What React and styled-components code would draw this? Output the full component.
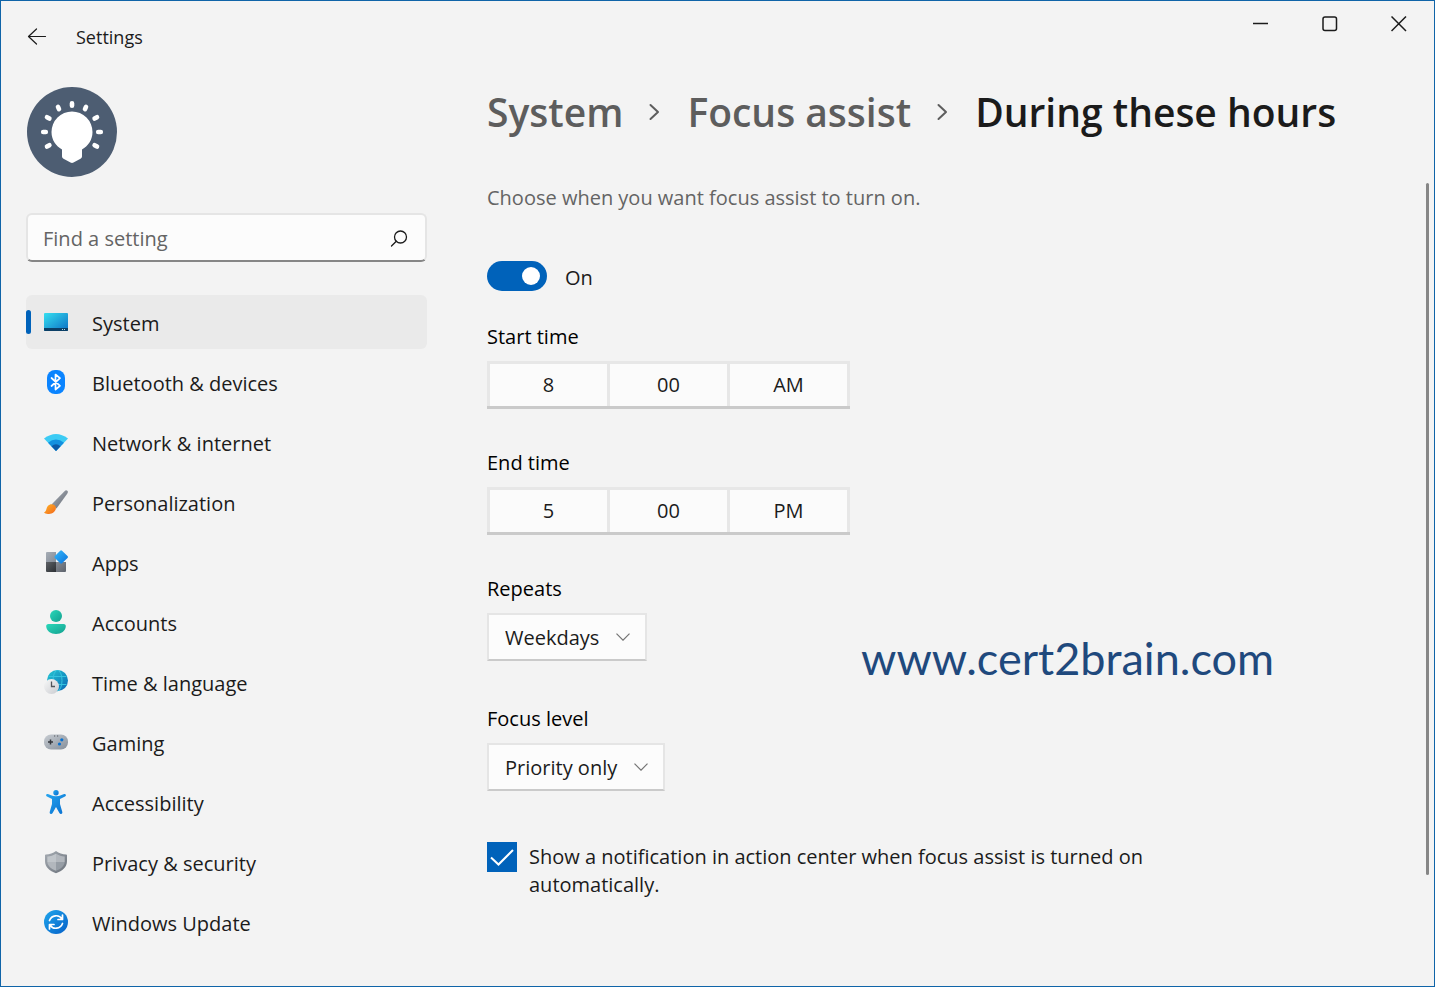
import React from "react";
import styled, { createGlobalStyle } from "styled-components";

const GlobalStyle = createGlobalStyle`
  * { box-sizing: border-box; }
  body {
    margin: 0;
    background: #f3f3f3;
    color: #1b1b1b;
    font-family: "Open Sans", "Noto Sans", sans-serif;
    font-size: 20px;
    line-height: 28px;
  }
  button, input, select { font: inherit; color: inherit; }
`;

const Window = styled.div`
  position: relative;
  min-height: 100vh;
  display: flex;
  flex-direction: column;
  border: 1px solid #0f64a8;
`;

const TitleBar = styled.header`
  display: flex;
  align-items: flex-start;
  justify-content: space-between;
  height: 72px;
`;

const TitleGroup = styled.div`
  display: flex;
  align-items: center;
  gap: 29px;
  height: 72px;
  padding-left: 26px;
`;

const WindowControls = styled.div`
  display: flex;
  padding-right: 1px;
`;

const IconButton = styled.button`
  display: grid;
  place-items: center;
  width: ${(p) => p.$width}px;
  height: ${(p) => p.$height}px;
  padding: 0;
  border: 0;
  background: none;
`;

const AppTitle = styled.span`
  font-size: 18px;
  line-height: 24px;
`;

const Body = styled.div`
  flex: 1;
  display: flex;
  gap: 60px;
  padding-left: 25px;
`;

const Sidebar = styled.aside`
  flex: 0 0 401px;
  padding: 14px 0 36px;
`;

const AvatarPicture = styled.svg`
  display: block;
  margin-left: 1px;
`;

const SearchBox = styled.form`
  display: flex;
  align-items: center;
  height: 49px;
  margin: 36px 0 33px;
  padding: 0 17px 0 15px;
  border: 2px solid #e5e5e5;
  border-bottom-color: #868686;
  border-radius: 6px;
  background: #fcfcfc;
`;

const SearchInput = styled.input`
  flex: 1;
  min-width: 0;
  padding: 2px 0 0;
  border: 0;
  outline: 0;
  background: none;
  &::placeholder { color: #646464; opacity: 1; }
`;

const Nav = styled.nav`
  display: flex;
  flex-direction: column;
  gap: 6px;
`;

const NavLink = styled.a`
  position: relative;
  display: flex;
  align-items: center;
  gap: 24px;
  height: 54px;
  padding: 4px 18px 0;
  border-radius: 6px;
  color: inherit;
  text-decoration: none;
  background: ${(p) => (p.$active ? "#eaeaea" : "transparent")};
  svg { flex: none; margin-bottom: 4px; }
  &::before {
    content: "";
    display: ${(p) => (p.$active ? "block" : "none")};
    position: absolute;
    left: 0;
    top: 15px;
    width: 5px;
    height: 24px;
    border-radius: 3px;
    background: #0062ba;
  }
`;

const Main = styled.main`
  flex: 1;
  min-width: 0;
  padding-top: 11px;
`;

const Breadcrumb = styled.h1`
  display: flex;
  align-items: center;
  gap: 26px;
  margin: 0 0 43px;
  font-size: 39px;
  line-height: 56px;
  font-weight: 600;
  white-space: nowrap;
`;

const Crumb = styled.a`
  color: #5d5d5d;
  text-decoration: none;
`;

const Scroller = styled.div`
  display: flex;
  justify-content: space-between;
`;

const Thumb = styled.div`
  flex: none;
  width: 3px;
  height: 692px;
  margin-right: 5px;
  border-radius: 2px;
  background: #868686;
`;

const Content = styled.div`
  max-width: 700px;
`;

const Intro = styled.p`
  margin: 1px 0 49px;
  color: #646464;
`;

const SwitchRow = styled.label`
  display: flex;
  align-items: center;
  gap: 18px;
  height: 30px;
  margin-bottom: 32px;
`;

const SwitchText = styled.span`
  padding-top: 3px;
`;

const Switch = styled.input`
  appearance: none;
  display: flex;
  align-items: center;
  justify-content: flex-start;
  width: 60px;
  height: 30px;
  margin: 0;
  padding: 0 7px;
  border-radius: 15px;
  background: #868686;
  &::after {
    content: "";
    width: 18px;
    height: 18px;
    border-radius: 50%;
    background: #fff;
  }
  &:checked { justify-content: flex-end; background: #0062ba; }
`;

const Field = styled.div`
  display: flex;
  flex-direction: column;
  align-items: flex-start;
  gap: 10px;
  margin-bottom: ${(p) => p.$after}px;
  color: #000;
`;

const TimePicker = styled.div`
  display: flex;
  gap: 3px;
  height: 48px;
  padding: 3px 3px 0;
  border-bottom: 3px solid #cacaca;
  background: #e7e7e7;
`;

const TimePart = styled.button`
  width: 117px;
  padding: 0;
  border: 0;
  background: #fbfbfb;
  color: #1b1b1b;
`;

const SelectWrap = styled.div`
  display: grid;
  align-items: center;
  justify-items: end;
  width: ${(p) => p.$width}px;
  svg { grid-area: 1 / 1; margin-right: 17px; pointer-events: none; }
`;

const Select = styled.select`
  grid-area: 1 / 1;
  appearance: none;
  width: 100%;
  height: 48px;
  padding: 2px 16px 0;
  border: 2px solid #e5e5e5;
  border-bottom-color: #cacaca;
  border-radius: 0;
  background: #fcfcfc;
  color: #1b1b1b;
`;

const CheckRow = styled.label`
  display: flex;
  align-items: flex-start;
  gap: 12px;
`;

const CheckText = styled.span`
  padding-top: 1px;
`;

const CheckHolder = styled.span`
  display: grid;
  flex: none;
  svg { grid-area: 1 / 1; pointer-events: none; }
`;

const Checkbox = styled.input`
  grid-area: 1 / 1;
  appearance: none;
  width: 30px;
  height: 30px;
  margin: 0;
  background: #fff;
  &:checked { background: #0062ba; }
`;

const Watermark = styled.div`
  position: absolute;
  top: 629px;
  right: 160px;
  font-family: Lato, sans-serif;
  font-size: 45px;
  line-height: 56px;
  color: #1f497d;
`;

const Grad = ({ id, from, to }) => (
  <linearGradient id={id} x1="0" y1="0" x2="1" y2="1">
    <stop offset="0" stopColor={from} />
    <stop offset="1" stopColor={to} />
  </linearGradient>
);

const Icon = ({ children }) => (
  <svg width="24" height="24" viewBox="0 0 24 24" aria-hidden="true">{children}</svg>
);

const SystemIcon = () => (
  <Icon>
    <Grad id="sys" from="#35dff0" to="#0c6fc4" />
    <rect y="3" width="24" height="18" rx="1" fill="url(#sys)" />
    <path d="M0 18h24v2a1 1 0 0 1-1 1H1a1 1 0 0 1-1-1z" fill="#0b3f66" />
    <path d="M18 19h1v1h-1zM20 19h1v1h-1z" fill="#b5ddeb" />
  </Icon>
);

const BluetoothIcon = () => (
  <Icon>
    <rect x="3" width="18" height="24" rx="8" fill="#0a84ff" />
    <path d="M7.500 8L16 15.800 11.500 19.500V4.500L16 8.200 7.500 16" fill="none" stroke="#fff" strokeWidth="1.700" strokeLinejoin="round" strokeLinecap="round" />
  </Icon>
);

const NetworkIcon = () => (
  <Icon>
    <path d="M0 8.500Q12-.5 24 8.500L12 21z" fill="#3ccbf4" />
    <path d="M4 12.700Q12 6.500 20 12.700L12 21z" fill="#1490df" />
    <path d="M7.500 16.300Q12 12.300 16.500 16.300L12 21z" fill="#0d5aa7" />
  </Icon>
);

const BrushIcon = () => (
  <Icon>
    <Grad id="handle" from="#a9afb7" to="#656b75" />
    <Grad id="bristle" from="#ffb526" to="#f2661c" />
    <path d="M7.500 14.500L20.500 1.200Q22-.3 23.300.700 24.500 1.900 23.200 3.800L12.500 18.500z" fill="url(#handle)" />
    <path d="M4 15.800c2.300-2.800 7.300-1.800 7.900 1.700.4 3.800-3.400 6.300-6.900 6.500-2.300.1-4.200-.4-5-1.500 2.600-.7 2-4.500 4-6.700z" fill="url(#bristle)" />
  </Icon>
);

const AppsIcon = () => (
  <Icon>
    <Grad id="appA" from="#a6adb6" to="#858d98" />
    <Grad id="appB" from="#5d6166" to="#2d3034" />
    <Grad id="appC" from="#868b93" to="#5c626b" />
    <Grad id="appD" from="#35b9fb" to="#0871dc" />
    <path d="M2 3a1 1 0 0 1 1-1h9v10H2z" fill="url(#appA)" />
    <path d="M2 12h10v10H3a1 1 0 0 1-1-1z" fill="url(#appB)" />
    <path d="M12 12h10v9a1 1 0 0 1-1 1h-9z" fill="url(#appC)" />
    <path d="M16.200.700q.9-.9 1.800 0l5.500 5.400q.9.900 0 1.800L18 13.300q-.9.900-1.800 0l-5.300-5.400q-.9-.9 0-1.800z" fill="url(#appD)" />
  </Icon>
);

const AccountsIcon = () => (
  <Icon>
    <Grad id="acc" from="#2ad8ba" to="#13a08f" />
    <circle cx="12" cy="6" r="6" fill="url(#acc)" />
    <path d="M4.500 14h15a2.300 2.300 0 0 1 2.300 2.500C21.500 21 17.300 24 12 24S2.500 21 2.200 16.500A2.300 2.300 0 0 1 4.500 14z" fill="url(#acc)" />
  </Icon>
);

const TimeIcon = () => (
  <Icon>
    <Grad id="globe" from="#25c8d2" to="#0867b5" />
    <Grad id="clock" from="#f8f8f8" to="#c9cbd0" />
    <circle cx="13.500" cy="10.500" r="10.500" fill="url(#globe)" />
    <g fill="none" stroke="#35c3de" strokeWidth="1">
      <ellipse cx="13.500" cy="10.500" rx="4.500" ry="10.300" />
      <path d="M4.500 6.500h18M4.500 14.500h18" />
    </g>
    <circle cx="7.500" cy="16.500" r="7.500" fill="url(#clock)" />
    <path d="M7.500 11.500v5h3.500" fill="none" stroke="#50545a" strokeWidth="1.300" />
  </Icon>
);

const GamingIcon = () => (
  <Icon>
    <Grad id="pad" from="#c8cdd3" to="#858e99" />
    <rect y="4.500" width="24" height="15" rx="7" fill="url(#pad)" />
    <path d="M6.500 9.500v5M4 12h5" stroke="#33373d" strokeWidth="1.500" />
    <path d="M10 6h1.200M13 6h1.200" stroke="#54585e" strokeWidth="1" />
    <circle cx="17.800" cy="9.800" r="1.600" fill="#0870cf" />
    <circle cx="15.500" cy="14" r="1.600" fill="#0870cf" />
  </Icon>
);

const AccessibilityIcon = () => (
  <Icon>
    <Grad id="a11y" from="#26a5ef" to="#086fd0" />
    <circle cx="12" cy="2.700" r="2.700" fill="url(#a11y)" />
    <path d="M3.800 4C5.500 4.600 8 6.200 12 6.200S18.500 4.600 20.200 4c1.700-.4 2.400 1.900.8 2.600L16 9v5l2.300 8c.4 1.900-2 2.700-2.900 1L12 17l-3.400 6c-.9 1.700-3.300.9-2.900-1L8 14V9L3 6.600C1.400 5.900 2.100 3.600 3.800 4z" fill="url(#a11y)" />
  </Icon>
);

const ShieldIcon = () => (
  <Icon>
    <Grad id="sh" from="#a7adb4" to="#697079" />
    <path d="M12 1c3 2.300 6.500 3.400 10.200 3.500.5 0 .8.300.8.800V11c0 6-4.500 10-11 12.200C5.500 21 1 17 1 11V5.300c0-.5.3-.8.800-.8C5.500 4.400 9 3.300 12 1z" fill="url(#sh)" />
    <path d="M12 3.800V12H3.300V6.500c3.200-.2 6-1.100 8.700-2.700z" fill="#c0c5ca" />
    <path d="M12 3.800V12h8.700V6.500c-3.200-.2-6-1.100-8.700-2.700z" fill="#b2b7bd" />
    <path d="M3.300 12H12v8.800C7 19 3.800 16 3.300 12z" fill="#b2b7bd" />
    <path d="M20.700 12H12v8.800c5-1.800 8.200-4.800 8.700-8.800z" fill="#969da5" />
  </Icon>
);

const UpdateIcon = () => (
  <Icon>
    <Grad id="upd" from="#20a6ec" to="#0560c8" />
    <circle cx="12" cy="12" r="12" fill="url(#upd)" />
    <g fill="none" stroke="#fff" strokeWidth="1.700" strokeLinecap="round" strokeLinejoin="round">
      <path d="M5.500 10.500c2-5.500 9.500-6.500 12.500-1.500M18.500 5v4.500H14" />
      <path d="M18.500 13.500c-2 5.500-9.500 6.500-12.500 1.500M5.500 19v-4.500H10" />
    </g>
  </Icon>
);

const Avatar = () => (
  <AvatarPicture width="90" height="90" viewBox="0 0 90 90" role="img" aria-label="Account picture">
    <circle cx="45" cy="45" r="45" fill="#4d5d72" />
    <path d="M45 24.500A20.500 20.500 0 0 0 24.500 45c0 8 4.500 14 10.500 17.500v7q0 1.500 1.500 2.300l7 3.700q1.500.8 3 0l7-3.700q1.500-.8 1.500-2.300v-7c6-3.500 10.500-9.500 10.500-17.500A20.500 20.500 0 0 0 45 24.500z" fill="#fff" />
    <path d="M45 16.200v2.600M31 19.800l1 2.400M59 19.800l-1 2.400M20 30.200l2.400 1.400M70 30.200l-2.400 1.400M16.200 45h2.600M71.200 45h2.600M20 59.600l2.400-1.400M70 59.600l-2.400-1.400" stroke="#fff" strokeWidth="4.600" strokeLinecap="round" />
  </AvatarPicture>
);

const BackArrow = () => (
  <svg width="20" height="18" viewBox="0 0 20 18" fill="none" stroke="#1b1b1b" strokeWidth="1.200" strokeLinecap="round" strokeLinejoin="round" aria-hidden="true">
    <path d="M9.500 1L1.500 8.500 9.500 16M1.500 8.500h17" />
  </svg>
);

const WindowGlyph = ({ d }) => (
  <svg width="16" height="16" viewBox="0 0 16 16" fill="none" stroke="#1b1b1b" strokeWidth="1.500" aria-hidden="true">
    <path d={d} />
  </svg>
);

const SearchGlyph = () => (
  <svg width="18" height="18" viewBox="0 0 18 18" fill="none" stroke="#1b1b1b" strokeWidth="1.300" strokeLinecap="round" aria-hidden="true">
    <circle cx="10.500" cy="8" r="6" />
    <path d="M6.300 12.300L1.500 17" />
  </svg>
);

const Separator = () => (
  <svg width="12" height="18" viewBox="0 0 12 18" fill="none" stroke="#5d5d5d" strokeWidth="2" strokeLinecap="round" strokeLinejoin="round" aria-hidden="true">
    <path d="M1.500 2L9 9 1.500 16" />
  </svg>
);

const Chevron = () => (
  <svg width="14" height="8" viewBox="0 0 14 8" fill="none" stroke="#747474" strokeWidth="1.200" aria-hidden="true">
    <path d="M.5.700L7 7.200 13.500.700" />
  </svg>
);

const navItems = [
  ["System", SystemIcon],
  ["Bluetooth & devices", BluetoothIcon],
  ["Network & internet", NetworkIcon],
  ["Personalization", BrushIcon],
  ["Apps", AppsIcon],
  ["Accounts", AccountsIcon],
  ["Time & language", TimeIcon],
  ["Gaming", GamingIcon],
  ["Accessibility", AccessibilityIcon],
  ["Privacy & security", ShieldIcon],
  ["Windows Update", UpdateIcon],
];

const windowButtons = [
  ["Minimize", "M0 7.500h15"],
  ["Maximize", "M3 1h9.500a2 2 0 0 1 2 2v9.500a2 2 0 0 1-2 2H3a2 2 0 0 1-2-2V3a2 2 0 0 1 2-2z"],
  ["Close", "M.5.500l14.500 14.500M15 .500L.5 15"],
];

function TimeField({ label, parts }) {
  return (
    <Field $after={40}>
      <span>{label}</span>
      <TimePicker role="group" aria-label={label}>
        {parts.map((part) => (
          <TimePart key={part} type="button">{part}</TimePart>
        ))}
      </TimePicker>
    </Field>
  );
}

function SelectField({ id, label, options, width, after }) {
  return (
    <Field $after={after}>
      <label htmlFor={id}>{label}</label>
      <SelectWrap $width={width}>
        <Select id={id} defaultValue={options[0]}>
          {options.map((option) => (
            <option key={option}>{option}</option>
          ))}
        </Select>
        <Chevron />
      </SelectWrap>
    </Field>
  );
}

export default function App() {
  return (
    <>
      <GlobalStyle />
      <Window>
        <TitleBar>
          <TitleGroup>
            <IconButton type="button" aria-label="Back" $width={20} $height={40}><BackArrow /></IconButton>
            <AppTitle>Settings</AppTitle>
          </TitleGroup>
          <WindowControls>
            {windowButtons.map(([label, d]) => (
              <IconButton key={label} type="button" aria-label={label} $width={69} $height={45}>
                <WindowGlyph d={d} />
              </IconButton>
            ))}
          </WindowControls>
        </TitleBar>
        <Body>
          <Sidebar>
            <Avatar />
            <SearchBox role="search">
              <SearchInput type="text" placeholder="Find a setting" aria-label="Find a setting" />
              <SearchGlyph />
            </SearchBox>
            <Nav>
              {navItems.map(([label, ItemIcon], i) => (
                <NavLink key={label} href="#" $active={i === 0}>
                  <ItemIcon />
                  {label}
                </NavLink>
              ))}
            </Nav>
          </Sidebar>
          <Main>
            <Breadcrumb>
              <Crumb href="#">System</Crumb>
              <Separator />
              <Crumb href="#">Focus assist</Crumb>
              <Separator />
              <span>During these hours</span>
            </Breadcrumb>
            <Scroller>
              <Content>
                <Intro>Choose when you want focus assist to turn on.</Intro>
                <SwitchRow>
                  <Switch type="checkbox" role="switch" defaultChecked />
                  <SwitchText>On</SwitchText>
                </SwitchRow>
                <TimeField label="Start time" parts={["8", "00", "AM"]} />
                <TimeField label="End time" parts={["5", "00", "PM"]} />
                <SelectField id="repeats" label="Repeats" options={["Weekdays"]} width={160} after={44} />
                <SelectField id="level" label="Focus level" options={["Priority only"]} width={178} after={51} />
                <CheckRow>
                  <CheckHolder>
                    <Checkbox type="checkbox" defaultChecked />
                    <svg width="30" height="30" viewBox="0 0 30 30" fill="none" stroke="#fff" strokeWidth="2" aria-hidden="true">
                      <path d="M4 15.500l7.500 7L26 8" />
                    </svg>
                  </CheckHolder>
                  <CheckText>Show a notification in action center when focus assist is turned on automatically.</CheckText>
                </CheckRow>
              </Content>
              <Thumb />
            </Scroller>
          </Main>
        </Body>
        <Watermark>www.cert2brain.com</Watermark>
      </Window>
    </>
  );
}
